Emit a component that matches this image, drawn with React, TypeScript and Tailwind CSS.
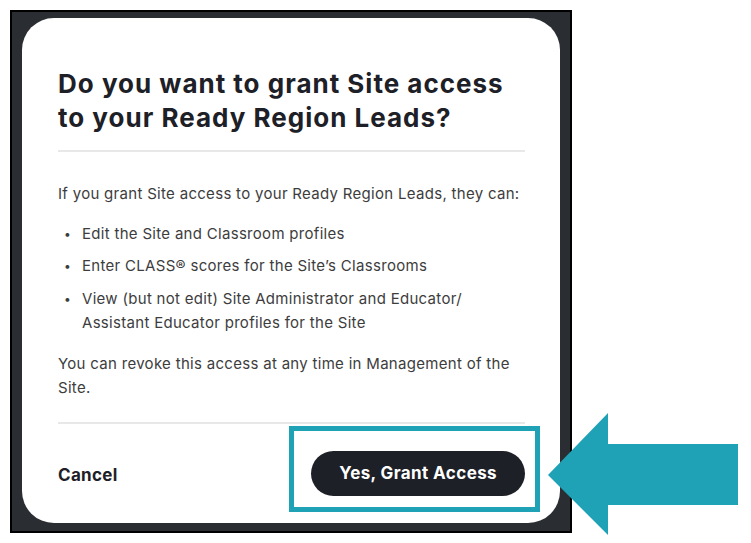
import React from 'react';

const bullets = [
  ['Edit the Site and Classroom profiles'],
  ['Enter CLASS® scores for the Site’s Classrooms'],
  ['View (but not edit) Site Administrator and Educator/', 'Assistant Educator profiles for the Site'],
];

const App: React.FC = () => {
  return (
    <div className="relative w-[751px] h-[543px] bg-white font-['Inter','Liberation_Sans',sans-serif] overflow-hidden">
      {/* Dark screenshot frame */}
      <div className="ml-[10px] mt-[10px] w-[562px] h-[523px] border-2 border-black bg-[#2a2d32] pl-[10px] pr-[10px] pt-[6px] pb-[8px]">
        {/* Modal */}
        <div className="h-full bg-white rounded-[32px] pl-[36px] pr-[35px] pt-[49px] pb-[26px] flex flex-col">
          <h2 className="text-[26px] leading-[34px] font-bold text-[#1e2027] whitespace-nowrap tracking-[1px]">
            Do you want to grant Site access
            <br />
            to your Ready Region Leads?
          </h2>
          <div className="mt-[15px] h-[2px] bg-[#e8e8e8]" />

          <div className="text-[15px] leading-[24px] text-[#3d3d3d] whitespace-nowrap tracking-[0.3px]">
            <p className="mt-[30px]">If you grant Site access to your Ready Region Leads, they can:</p>
            <ul className="mt-[16px] flex flex-col gap-[8px]">
              {bullets.map((lines, i) => (
                <li key={i} className={`flex items-start ${i === 2 ? 'pt-[1px]' : ''}`}>
                  <span className="w-[24px] pl-[6px] shrink-0 text-[12px]">•</span>
                  <span>
                    {lines.map((l, j) => (
                      <React.Fragment key={j}>
                        {j > 0 && <br />}
                        {l}
                      </React.Fragment>
                    ))}
                  </span>
                </li>
              ))}
            </ul>
            <p className="mt-[17px]">
              You can revoke this access at any time in Management of the
              <br />
              Site.
            </p>
          </div>

          <div className="mt-[22px] h-[2px] bg-[#e8e8e8]" />

          <div className="mt-[27px] flex items-center justify-between">
            <button className="text-[17px] font-bold text-[#1e2027] tracking-[0.3px] pt-[4px]">Cancel</button>
            <div className="relative">
              {/* highlight annotation */}
              <div className="absolute -left-[22px] -right-[15px] -top-[25px] -bottom-[16px] border-[5px] border-[#1fa2b6]" />
              <button className="relative h-[45px] px-[28px] rounded-full bg-[#1e2027] text-white text-[17px] font-bold tracking-[0.4px]">
                Yes, Grant Access
              </button>
            </div>
          </div>
        </div>
      </div>

      {/* Arrow annotation */}
      <svg className="absolute left-[548px] top-[413px]" width="190" height="122" viewBox="0 0 190 122">
        <polygon points="0,62 60,0 60,31 190,31 190,92 60,92 60,122" fill="#1fa2b6" />
      </svg>
    </div>
  );
};

export default App;
